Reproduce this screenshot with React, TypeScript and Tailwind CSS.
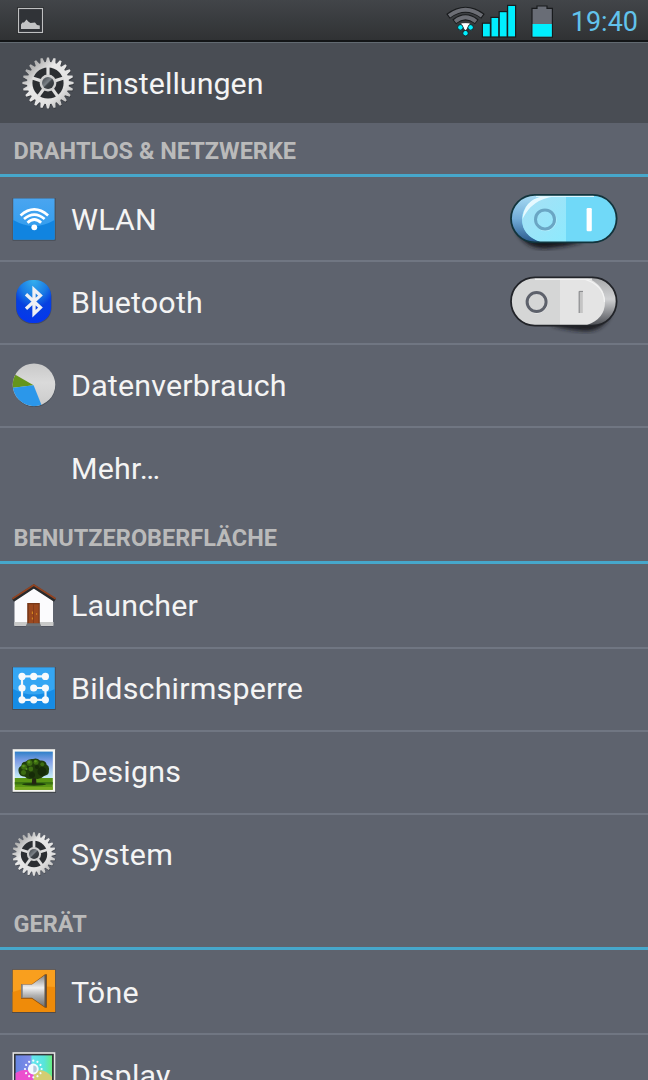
import React from 'react';

const polar = (r: number, deg: number) => {
	const a = (deg * Math.PI) / 180;
	return `${(26 + r * Math.sin(a)).toFixed(2)} ${(26 - r * Math.cos(a)).toFixed(2)}`;
};

const TEETH = 24;

const gearOutline = () => {
	const step = 360 / TEETH;
	const points: string[] = [];
	for (let i = 0; i < TEETH; i++) {
		const a = i * step;
		points.push(polar(21, a - 5.8), polar(25.6, a - 2.3));
		points.push(polar(25.6, a + 2.3), polar(21, a + 5.8));
	}
	return `M${points.join('L')}Z`;
};

const GearIcon = ({ id, className }: { id: string; className: string }) => (
	<svg className={className} viewBox="0 0 52 52">
		<defs>
			<linearGradient id={id} x1="0" y1="0" x2="1" y2="1">
				<stop offset="0" stopColor="#f0f0f0" />
				<stop offset="0.18" stopColor="#b0b0b0" />
				<stop offset="0.38" stopColor="#e8e8e8" />
				<stop offset="0.7" stopColor="#e2e2e2" />
				<stop offset="0.85" stopColor="#c2c2c2" />
				<stop offset="1" stopColor="#e6e6e6" />
			</linearGradient>
			<linearGradient id={`${id}-hub`} x1="0" y1="0" x2="1" y2="1">
				<stop offset="0" stopColor="#3a3f44" />
				<stop offset="0.45" stopColor="#7a8086" />
				<stop offset="0.55" stopColor="#3f4449" />
				<stop offset="1" stopColor="#2b2f33" />
			</linearGradient>
		</defs>
		<path d={gearOutline()} transform="translate(0.5 0.9)" fill="#000" opacity="0.28" />
		<path d={gearOutline()} fill={`url(#${id})`} />
		<circle cx="26" cy="26" r="15.6" fill="#2b2e32" />
		{[0, 72, 144, 216, 288].map((a) => (
			<path key={a} d="M24.4 9.5h3.2v12h-3.2z" fill="#dedede" transform={`rotate(${a} 26 26)`} />
		))}
		<circle cx="26" cy="26" r="8.4" fill="#d0d0d0" />
		<circle cx="26" cy="26" r="6" fill={`url(#${id}-hub)`} />
	</svg>
);

const WifiIcon = () => (
	<svg className="size-11" viewBox="0 0 44 44">
		<defs>
			<linearGradient id="wifi-bg" x1="0" y1="0" x2="0" y2="1">
				<stop offset="0" stopColor="#4aa5f0" />
				<stop offset="1" stopColor="#2b9bee" />
			</linearGradient>
		</defs>
		<rect x="0.6" y="1" width="43" height="42.7" fill="#474c55" />
		<rect x="1.2" y="1.4" width="41.4" height="41.2" fill="url(#wifi-bg)" />
		<path d="M1.2 23Q22 35 42.6 23V42.6H1.2z" fill="#1184e0" />
		<g fill="none" stroke="#fff" strokeWidth="2.7">
			<path d="M8.5 18.4Q22.3 6.5 36.1 18.4" />
			<path d="M12 22Q22.3 13.2 32.6 22" />
			<path d="M15.5 25.8Q22.3 19.2 29.1 25.8" />
		</g>
		<circle cx="22.3" cy="30.3" r="2.9" fill="#fff" />
	</svg>
);

const BluetoothIcon = () => (
	<svg className="size-11" viewBox="0 0 44 44">
		<defs>
			<radialGradient id="bt-bg" cx="0.5" cy="0" r="1">
				<stop offset="0" stopColor="#35b0ee" />
				<stop offset="0.4" stopColor="#1a7ce4" />
				<stop offset="0.65" stopColor="#0640e0" />
				<stop offset="1" stopColor="#0536ee" />
			</radialGradient>
		</defs>
		<rect x="4" y="1" width="35.5" height="43" rx="16" fill="#464c5c" />
		<rect x="4.2" y="0" width="35" height="43" rx="16" fill="url(#bt-bg)" />
		<path d="M14 14.2L28.4 27.6L22 33.6V9.6L28.4 15.6L14 28.8" fill="none" stroke="#eef0f4" strokeWidth="3.3" />
	</svg>
);

const DataIcon = () => (
	<svg className="size-11" viewBox="0 0 44 44">
		<defs>
			<linearGradient id="pie-bg" x1="0" y1="0" x2="0" y2="1">
				<stop offset="0" stopColor="#c9c9c9" />
				<stop offset="0.45" stopColor="#dadada" />
				<stop offset="1" stopColor="#cbcbcb" />
			</linearGradient>
		</defs>
		<circle cx="22.3" cy="22.7" r="21.3" fill="#4a5059" />
		<circle cx="22" cy="21.8" r="21.3" fill="url(#pie-bg)" />
		<path d="M21.6 22.3L3.4 11.8A21.3 21.3 0 0 0 .9 24.8z" fill="#65951b" />
		<path d="M21.6 22.3L.9 24.8A21.3 21.3 0 0 0 29.4 41.8z" fill="#2b97ea" />
	</svg>
);

const HouseIcon = () => (
	<svg className="size-11" viewBox="0 0 44 44">
		<path d="M3 16L22 3L41 16V43.8H3z" fill="#41464e" opacity="0.6" />
		<path d="M2.5 17L22 5L41 17V42.8H2.5z" fill="#fbfbfd" />
		<path d="M2.5 39h39V42.8h-39z" fill="#c8c9c8" />
		<path d="M1 17.2L21.8 3.5L43 17.2" fill="none" stroke="#282a2c" strokeWidth="3.6" />
		<path d="M.4 15.8L21.8 2L43.6 15.8" fill="none" stroke="#924320" strokeWidth="1.8" />
		<path d="M15.2 20h12.6v21H15.2z" fill="#773818" />
		<path d="M16.8 21.3h9.8V40.5h-9.8z" fill="#9b481e" />
		<path d="M21.5 21.3v19.2" stroke="#7f3a18" strokeWidth="0.8" />
		<path d="M20.4 28.5v2.5M20.4 34.5v2M24.6 30.3v1.4" stroke="#d88a20" strokeWidth="1.1" />
		<path d="M15 40.3h13l1.3 3.2H13.6z" fill="#6e7277" />
	</svg>
);

const PatternIcon = () => (
	<svg className="size-11" viewBox="0 0 44 44">
		<rect x="0.3" y="1" width="43.4" height="43" fill="#464c56" />
		<rect x="1" y="1.3" width="41.8" height="41.5" fill="#35a6f3" />
		<path d="M1 23Q22 34 42.8 23V42.8H1z" fill="#168ce5" />
		<path d="M33.5 10.4H10V33.8H33.5V22H22" fill="none" stroke="#f2f7fb" strokeWidth="2.2" />
		{[10, 21.7, 33.4].map((x) =>
			[10.4, 22, 33.8].map((y) => <circle key={`${x}-${y}`} cx={x} cy={y} r="3.6" fill="#f7fafc" />)
		)}
	</svg>
);

const TreeIcon = () => (
	<svg className="size-11" viewBox="0 0 44 44">
		<defs>
			<linearGradient id="sky" x1="0" y1="0" x2="0" y2="1">
				<stop offset="0" stopColor="#2f80c8" />
				<stop offset="0.35" stopColor="#819fe6" />
				<stop offset="1" stopColor="#c9f0f6" />
			</linearGradient>
		</defs>
		<rect x="0.4" y="0.8" width="43.6" height="43.2" fill="#42474d" />
		<rect x="0.6" y="0.2" width="42.6" height="42.6" fill="#f6f6f2" />
		<rect x="2.8" y="2.6" width="38" height="27" fill="url(#sky)" />
		<rect x="2.8" y="29" width="38" height="11.8" fill="#5a9515" />
		<path d="M2.8 33h38v2.6h-38z" fill="#3b7411" />
		<path d="M2.8 38h38v2.8h-38z" fill="#78aa20" />
		<ellipse cx="22" cy="35.3" rx="12" ry="1.4" fill="#1d3c0b" />
		<path d="M20.5 24h3.4l.5 11.2h-4.6z" fill="#242413" />
		<path
			d="M6.5 22Q6 18 9.5 17Q9 13 14 12.5Q16 9.5 21 10Q25 8.5 28 11.5Q34 11 34.5 15.5Q38 17.5 36.8 22Q37.5 26 32 27Q28 31.5 22 29.3Q16 31.5 13 27.8Q6.8 27.5 6.5 22z"
			fill="#203d0b"
		/>
		<g fill="#3d6d12">
			<circle cx="12" cy="18" r="2.8" />
			<circle cx="17.5" cy="14" r="3" />
			<circle cx="24" cy="13.3" r="2.5" />
			<circle cx="18.8" cy="20" r="2.4" />
			<circle cx="11.5" cy="23.5" r="2.5" />
			<circle cx="30.3" cy="15.3" r="2" />
		</g>
		<g fill="#58921c">
			<circle cx="11.5" cy="17" r="1.3" />
			<circle cx="17" cy="13" r="1.5" />
			<circle cx="23.5" cy="12.3" r="1.2" />
			<circle cx="14.5" cy="20" r="1" />
		</g>
		<g fill="#162b08">
			<circle cx="30" cy="22.5" r="4.5" />
			<circle cx="25" cy="18" r="2" />
			<circle cx="20" cy="26" r="3" />
		</g>
	</svg>
);

const SoundIcon = () => (
	<svg className="size-11" viewBox="0 0 44 44">
		<defs>
			<linearGradient id="horn" x1="0" y1="0" x2="0" y2="1">
				<stop offset="0" stopColor="#858585" />
				<stop offset="0.4" stopColor="#f0f0f0" />
				<stop offset="0.65" stopColor="#b0b0b0" />
				<stop offset="1" stopColor="#707070" />
			</linearGradient>
		</defs>
		<rect x="0" y="0.5" width="43.8" height="43.5" fill="#514b48" />
		<rect x="0.7" y="0.9" width="42.4" height="42" fill="#f99f1e" />
		<path d="M.7 23Q22 16 43.1 18V42.9H.7z" fill="#ef8b09" />
		<path d="M9 15h11L33 5.2h2v33.6h-2L20 29.8H9z" fill="#92500a" />
		<path d="M9.4 15.6H20L32.7 6.2V37.7L20 28.8H9.4z" fill="url(#horn)" />
		<path d="M32.7 5.8h1.6v32.4h-1.6z" fill="#555" />
		<path d="M9.2 15.6h1.5v13.2H9.2z" fill="#777" />
	</svg>
);

const DisplayIcon = () => (
	<svg className="size-11" viewBox="0 0 44 44">
		<defs>
			<linearGradient id="disp-top" x1="0" y1="0" x2="1" y2="0">
				<stop offset="0" stopColor="#6585e2" />
				<stop offset="0.4" stopColor="#7f8ae8" />
				<stop offset="0.46" stopColor="#66e6ef" />
				<stop offset="0.78" stopColor="#58e4dc" />
				<stop offset="1" stopColor="#67ee84" />
			</linearGradient>
		</defs>
		<rect x="0.5" y="0.2" width="42.8" height="43.5" fill="#e5e5e5" />
		<rect x="2" y="1.8" width="39.8" height="40" fill="#33363a" />
		<rect x="3.6" y="3.4" width="36.4" height="37" fill="url(#disp-top)" />
		<path d="M3.6 21Q13 15 21.7 20V40.4H3.6z" fill="#ec4fce" />
		<path d="M21.7 20Q32 15 40 25V40.4H21.7z" fill="#d3cd72" />
		{[0, 30, 60, 90, 120, 150, 180, 210, 240, 270, 300, 330].map((a) => (
			<circle key={a} cx="21.3" cy="8.7" r="1.1" fill="#f4faff" transform={`rotate(${a} 21.3 17)`} />
		))}
		<circle cx="21.3" cy="17" r="5.4" fill="#f4faff" />
		<path d="M21.3 13.5a3.5 3.5 0 0 1 0 7z" fill="#b8c8dc" />
	</svg>
);

const SwitchOn = () => (
	<svg className="w-28 h-16" viewBox="0 0 112 64">
		<defs>
			<linearGradient id="on-edge" x1="0" y1="0" x2="0" y2="1">
				<stop offset="0" stopColor="#a9dcf4" />
				<stop offset="0.5" stopColor="#73add9" />
				<stop offset="1" stopColor="#28598c" />
			</linearGradient>
			<linearGradient id="on-left" x1="0" y1="0" x2="1" y2="1">
				<stop offset="0" stopColor="#a8dff4" />
				<stop offset="1" stopColor="#8deafe" />
			</linearGradient>
			<clipPath id="on-clip">
				<rect x="3.6" y="8.6" width="104.4" height="46.4" rx="23.2" />
			</clipPath>
			<filter id="on-shadow" x="-20%" y="-60%" width="140%" height="220%">
				<feGaussianBlur stdDeviation="2" />
			</filter>
		</defs>
		<path d="M8 43Q18 64 42 61Q60 59 76 55L40 50z" fill="#15181c" filter="url(#on-shadow)" />
		<rect x="3" y="7.8" width="105.6" height="47.6" rx="23.8" fill="url(#on-edge)" />
		<g clipPath="url(#on-clip)">
			<path d="M36 8H109V56H36Q14 50 14 32Q15 14 36 8z" fill="#70d9f8" />
			<path d="M36 8H58V56H36Q14 50 14 32Q15 14 36 8z" fill="url(#on-left)" />
			<path d="M14.5 32Q16 13 34 9.4H46Q24 12 14.5 32z" fill="#e6f9ff" />
		</g>
		<path d="M28 9.2H86" stroke="#dcf7ff" strokeWidth="1.4" />
		<rect x="3" y="7.8" width="105.6" height="47.6" rx="23.8" fill="none" stroke="#12343c" strokeWidth="1.8" />
		<circle cx="37.4" cy="33" r="10.8" fill="none" stroke="#c2f4ff" strokeWidth="0.8" />
		<circle cx="37" cy="32.4" r="9.5" fill="none" stroke="#6aa6c4" strokeWidth="3" />
		<rect x="78.6" y="21" width="5.2" height="23.2" rx="1.2" fill="#fff" />
	</svg>
);

const SwitchOff = () => (
	<svg className="w-28 h-16" viewBox="0 0 112 64">
		<defs>
			<linearGradient id="off-edge" x1="0" y1="0" x2="0" y2="1">
				<stop offset="0" stopColor="#a7a8aa" />
				<stop offset="0.45" stopColor="#d0d1d3" />
				<stop offset="1" stopColor="#4b4d53" />
			</linearGradient>
			<clipPath id="off-clip">
				<rect x="3.6" y="8" width="104.4" height="47" rx="23.5" />
			</clipPath>
			<filter id="off-shadow" x="-20%" y="-60%" width="140%" height="220%">
				<feGaussianBlur stdDeviation="2" />
			</filter>
		</defs>
		<path d="M103 44Q94 63 74 61Q56 59 42 55L70 50z" fill="#1a1c20" filter="url(#off-shadow)" />
		<rect x="3" y="7.4" width="105.6" height="48.2" rx="24" fill="url(#off-edge)" />
		<g clipPath="url(#off-clip)">
			<path d="M0 6H74Q97 13 97 32Q97 50 76 56H0z" fill="#e4e4e4" />
			<path d="M0 6h52v50H0z" fill="#d5d6d6" />
		</g>
		<path d="M27 9H84" stroke="#f8f8f8" strokeWidth="1.6" />
		<path d="M76 9Q96 15 96.5 32" fill="none" stroke="#f4f4f4" strokeWidth="1.2" />
		<rect x="3" y="7.4" width="105.6" height="48.2" rx="24" fill="none" stroke="#222429" strokeWidth="1.8" />
		<circle cx="28.8" cy="32.6" r="10.6" fill="none" stroke="#f2f2f2" strokeWidth="0.8" />
		<circle cx="28.6" cy="32" r="9.5" fill="none" stroke="#5d616b" strokeWidth="3" />
		<rect x="70.8" y="21" width="4" height="22" fill="#c4c4c4" />
		<path d="M71.2 43V21.4H75" fill="none" stroke="#858689" strokeWidth="1" />
	</svg>
);

const StatusBar = () => (
	<div className="flex h-[42px] shrink-0 items-center border-b-2 border-[#131517] bg-linear-to-b from-[#424549] to-[#303234] pt-1 pr-2.5 pl-[17px]">
		<svg className="mb-[3px] h-[27px] w-[27px]" viewBox="0 0 27 27">
			<rect x="1.2" y="1.2" width="24.4" height="24.6" fill="#303337" stroke="#202225" strokeWidth="2" />
			<rect x="1.5" y="1.5" width="24" height="24" fill="none" stroke="#bfc0c1" strokeWidth="1.2" />
			<path d="M4 22V17.4L5.4 15.5H7L9.5 12.4L11.5 14.8L13.5 16L18 15.6L20 18L22.8 18.5V22z" fill="#c2c3c4" />
		</svg>
		<svg className="ml-auto h-10 w-[108px] shrink-0" viewBox="0 0 108 40">
			<g fill="none">
				<path d="M2 14.3Q19.5 1.3 37 14.3" stroke="#191b1d" strokeWidth="6" />
				<path d="M8.2 19.8Q19.5 10.8 30.8 19.8" stroke="#191b1d" strokeWidth="6" />
				<path d="M3 13.9Q19.5 1.7 36 13.9" stroke="#6c6e75" strokeWidth="3.8" />
				<path d="M9 19.4Q19.5 11.2 30 19.4" stroke="#6c6e75" strokeWidth="3.8" />
			</g>
			<path d="M14.8 21.8Q19.5 20.6 24.2 21.8L19.5 28.5z" fill="#fff" />
			<g fill="#00efff" stroke="#191b1d">
				<circle cx="14.4" cy="25.4" r="2.8" />
				<circle cx="24.6" cy="25.4" r="2.8" />
				<circle cx="19.5" cy="31.2" r="2.8" />
			</g>
			<path d="M15.6 21.6H23.4L19.5 28z" fill="#fff" />
			<g fill="#00efff" stroke="#191b1d" strokeWidth="1.2">
				<rect x="36.4" y="21.2" width="8" height="13.8" />
				<rect x="44.9" y="15.4" width="8" height="19.6" />
				<rect x="53.2" y="9.6" width="8" height="25.4" />
				<rect x="61.6" y="3.4" width="8" height="31.6" />
			</g>
			<path d="M86 6.4H91V4H101V6.4H106.4V35.2H86z" fill="#696d76" stroke="#191b1d" strokeWidth="1.2" />
			<path d="M86.6 22H105.8V34.6H86.6z" fill="#00efff" />
		</svg>
		<span className="ml-[17px] text-[27px] leading-none text-[#62c3ec]">19:40</span>
	</div>
);

const SectionTitle = ({ children }: { children: React.ReactNode }) => (
	<h2 className="flex h-[54.3px] items-center border-b-[3px] border-[#46a7cb] pt-[7px] pl-[13.5px] text-[23.5px] leading-none font-bold text-[#bababa]">
		{children}
	</h2>
);

type RowProps = { icon?: React.ReactNode; label: string; control?: React.ReactNode };

const Row = ({ icon, label, control }: RowProps) => (
	<li className="flex h-[83px] items-center border-t-2 border-[#707682] pr-7 pb-[2px] pl-3 first:border-transparent">
		<div className="size-11">{icon}</div>
		<span className="ml-[15px] flex-1 pt-[3px] text-[30.4px] leading-none tracking-[0.2px] text-[#f4f4f4]">{label}</span>
		{control}
	</li>
);

const sections: { title: string; rows: RowProps[] }[] = [
	{
		title: 'DRAHTLOS & NETZWERKE',
		rows: [
			{ icon: <WifiIcon />, label: 'WLAN', control: <SwitchOn /> },
			{ icon: <BluetoothIcon />, label: 'Bluetooth', control: <SwitchOff /> },
			{ icon: <DataIcon />, label: 'Datenverbrauch' },
			{ label: 'Mehr…' },
		],
	},
	{
		title: 'BENUTZEROBERFLÄCHE',
		rows: [
			{ icon: <HouseIcon />, label: 'Launcher' },
			{ icon: <PatternIcon />, label: 'Bildschirmsperre' },
			{ icon: <TreeIcon />, label: 'Designs' },
			{ icon: <GearIcon id="gear-row" className="size-11" />, label: 'System' },
		],
	},
	{
		title: 'GERÄT',
		rows: [
			{ icon: <SoundIcon />, label: 'Töne' },
			{ icon: <DisplayIcon />, label: 'Display' },
		],
	},
];

const App = () => {
	return (
		<div className="flex h-[1080px] w-[648px] flex-col overflow-hidden bg-[#5e636e] font-['Roboto',sans-serif]">
			<StatusBar />
			<header className="flex h-[81px] shrink-0 items-center border-t border-[#626a71] bg-[#494d54] pl-[22px]">
				<GearIcon id="gear-title" className="size-[52px]" />
				<h1 className="ml-[7.5px] pt-[2px] text-[30.4px] leading-none tracking-[0.05px] text-[#f4f4f4]">Einstellungen</h1>
			</header>
			<main>
				{sections.map((section) => (
					<section key={section.title}>
						<SectionTitle>{section.title}</SectionTitle>
						<ul>
							{section.rows.map((row) => (
								<Row key={row.label} {...row} />
							))}
						</ul>
					</section>
				))}
			</main>
		</div>
	);
};

export default App;
